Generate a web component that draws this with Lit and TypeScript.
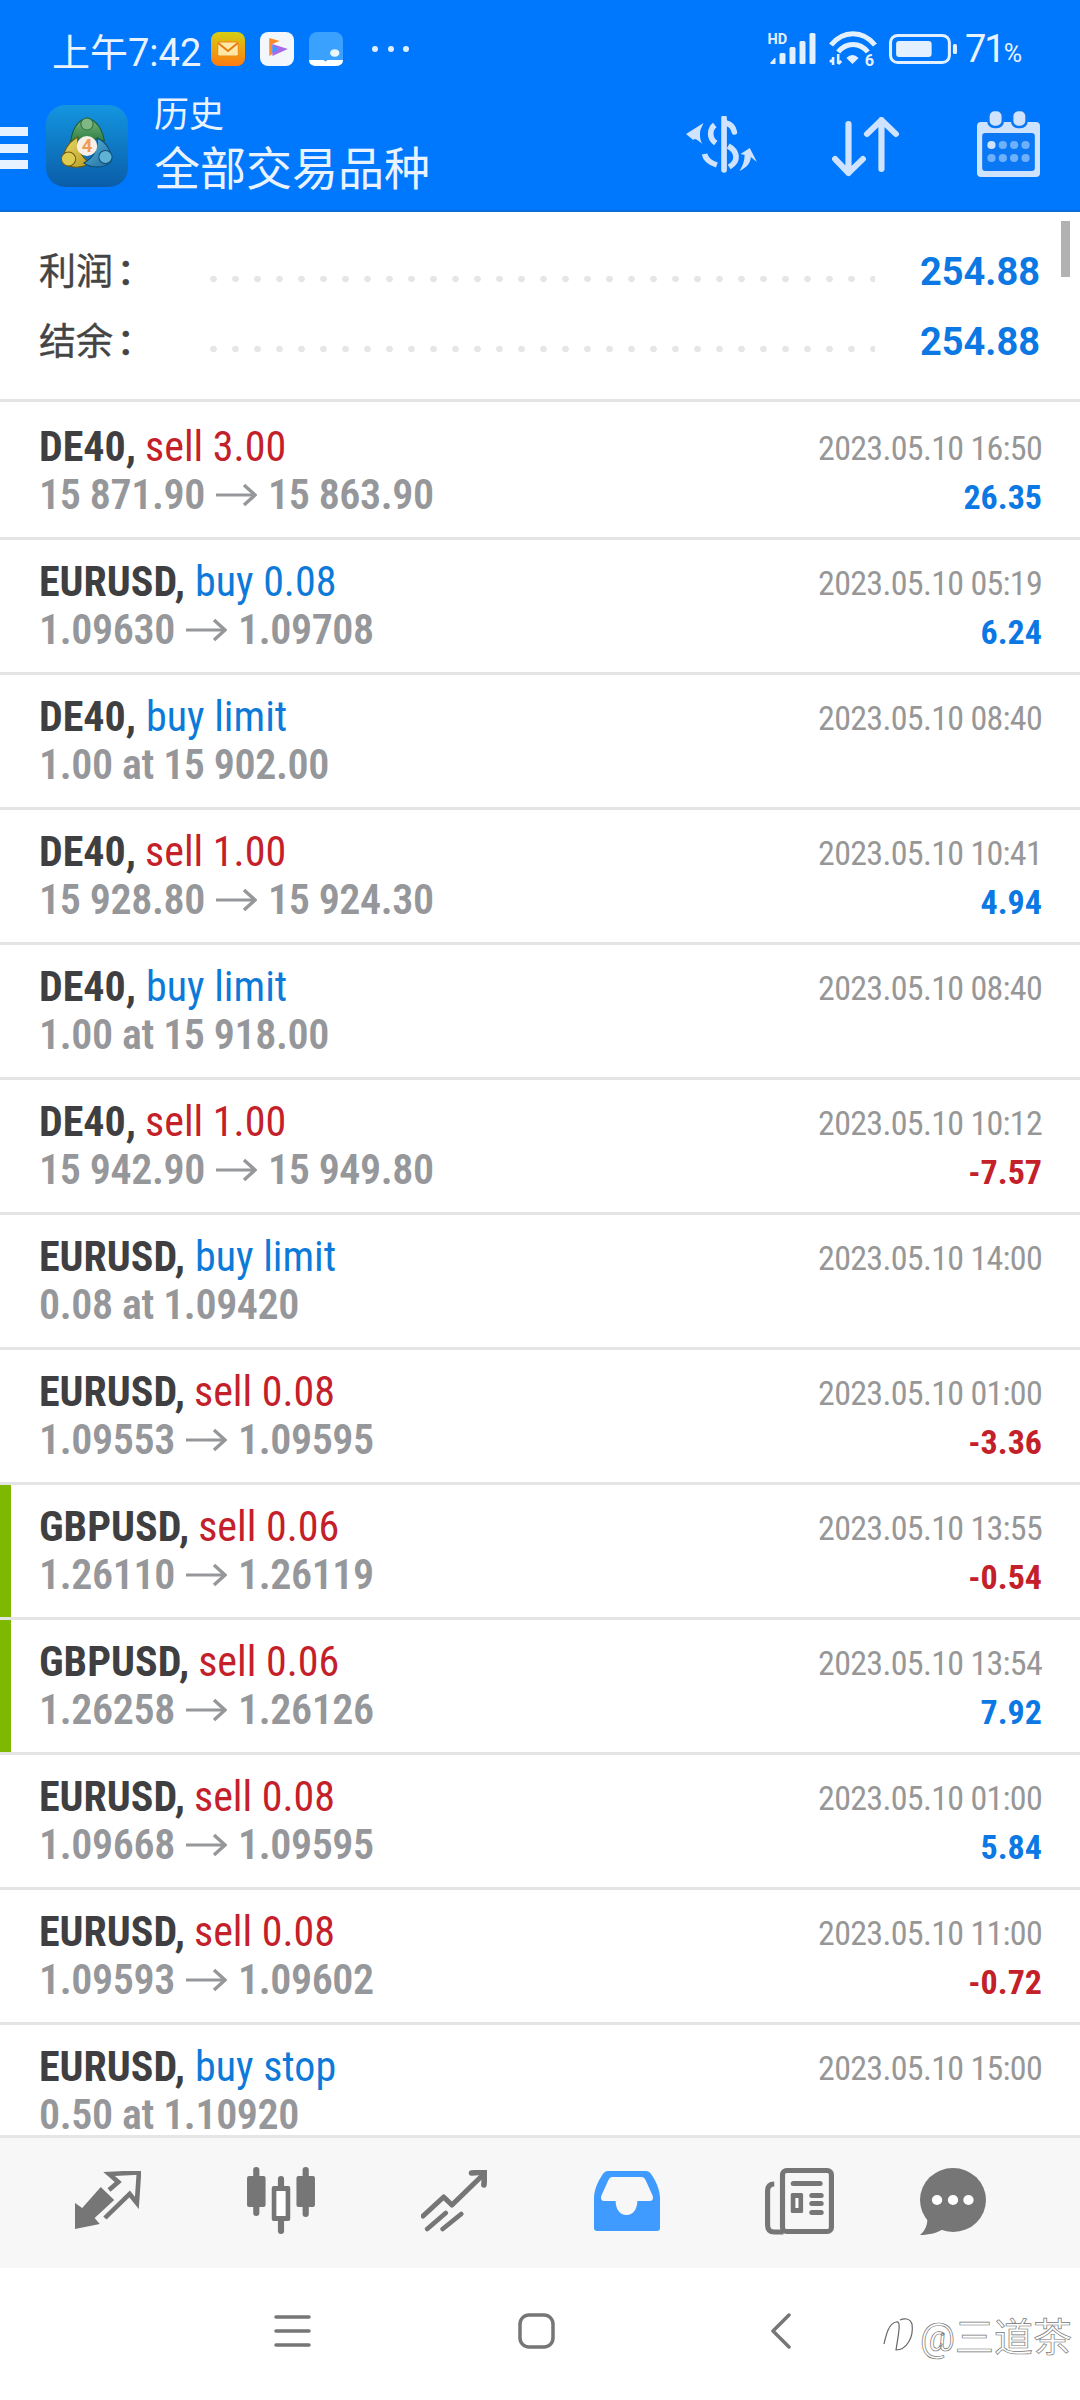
import { LitElement, html, css, svg, nothing } from 'lit';
import { customElement } from 'lit/decorators.js';
import { classMap } from 'lit/directives/class-map.js';

type Side = 'sell' | 'buy';

interface Deal {
  symbol: string;
  side: Side;
  action: string;
  from?: string;
  to?: string;
  order?: string;
  time: string;
  profit?: string;
  marked?: boolean;
}

const DEALS: Deal[] = [
  { symbol: 'DE40', side: 'sell', action: 'sell 3.00', from: '15 871.90', to: '15 863.90', time: '2023.05.10 16:50', profit: '26.35' },
  { symbol: 'EURUSD', side: 'buy', action: 'buy 0.08', from: '1.09630', to: '1.09708', time: '2023.05.10 05:19', profit: '6.24' },
  { symbol: 'DE40', side: 'buy', action: 'buy limit', order: '1.00 at 15 902.00', time: '2023.05.10 08:40' },
  { symbol: 'DE40', side: 'sell', action: 'sell 1.00', from: '15 928.80', to: '15 924.30', time: '2023.05.10 10:41', profit: '4.94' },
  { symbol: 'DE40', side: 'buy', action: 'buy limit', order: '1.00 at 15 918.00', time: '2023.05.10 08:40' },
  { symbol: 'DE40', side: 'sell', action: 'sell 1.00', from: '15 942.90', to: '15 949.80', time: '2023.05.10 10:12', profit: '-7.57' },
  { symbol: 'EURUSD', side: 'buy', action: 'buy limit', order: '0.08 at 1.09420', time: '2023.05.10 14:00' },
  { symbol: 'EURUSD', side: 'sell', action: 'sell 0.08', from: '1.09553', to: '1.09595', time: '2023.05.10 01:00', profit: '-3.36' },
  { symbol: 'GBPUSD', side: 'sell', action: 'sell 0.06', from: '1.26110', to: '1.26119', time: '2023.05.10 13:55', profit: '-0.54', marked: true },
  { symbol: 'GBPUSD', side: 'sell', action: 'sell 0.06', from: '1.26258', to: '1.26126', time: '2023.05.10 13:54', profit: '7.92', marked: true },
  { symbol: 'EURUSD', side: 'sell', action: 'sell 0.08', from: '1.09668', to: '1.09595', time: '2023.05.10 01:00', profit: '5.84' },
  { symbol: 'EURUSD', side: 'sell', action: 'sell 0.08', from: '1.09593', to: '1.09602', time: '2023.05.10 11:00', profit: '-0.72' },
  { symbol: 'EURUSD', side: 'buy', action: 'buy stop', order: '0.50 at 1.10920', time: '2023.05.10 15:00' },
];

const arrow = html`<svg class="arrow" width="41" height="24" viewBox="0 0 41 24" fill="none" stroke="#96979a">
  <path d="M0 12H39" stroke-width="3" />
  <path d="M28 2L39 12L28 22" stroke-width="3.4" />
</svg>`;

const mailIcon = svg`<svg width="34" height="34" viewBox="0 0 33 34" preserveAspectRatio="none">
  <defs><linearGradient id="mail" x1="0" y1="0" x2="0" y2="1"><stop offset="0" stop-color="#d3cf12" /><stop offset="1" stop-color="#ff7a10" /></linearGradient></defs>
  <rect width="33" height="34" rx="8" fill="url(#mail)" />
  <rect x="6.5" y="10" width="20" height="14" rx="1.5" fill="#ffe9a8" stroke="#f08a10" stroke-width="1" />
  <path d="M7 11L16.5 19L26 11" fill="none" stroke="#e57c0c" stroke-width="1.8" />
</svg>`;

const playIcon = svg`<svg width="34" height="34" viewBox="0 0 33 34" preserveAspectRatio="none">
  <rect width="33" height="34" rx="8" fill="#f3f6fb" />
  <path d="M9 6L19 9L12 12V22L9 24Z" fill="#ff8a2a" />
  <path d="M12 12L27 17L12 24Z" fill="#a86be8" />
  <path d="M12 13L18 17L12 21Z" fill="#3f9bff" />
</svg>`;

const noteIcon = svg`<svg width="34" height="34" viewBox="0 0 33 34" preserveAspectRatio="none">
  <path d="M8 0H25A8 8 0 0 1 33 8V27Q33 34 25 34H8Q0 34 0 27V8A8 8 0 0 1 8 0Z" fill="#3ba1ff" />
  <path d="M0 28H14L16 29.5L18 28H33V28Q33 34 25 34H8Q0 34 0 28Z" fill="#fff" />
  <ellipse cx="25" cy="21" rx="4.5" ry="3.8" fill="#eaf6ff" />
</svg>`;

const signalIcon = svg`<svg width="50" height="34" viewBox="0 0 49 34" fill="#e3f0ff">
  <text x="0" y="12" font-family="Roboto" font-weight="700" font-size="14.5">HD</text>
  <path d="M3 30.5L7 26H8V32H3Z" />
  <rect x="12" y="21" width="6" height="11" rx="1.5" />
  <rect x="22" y="15" width="6" height="17" rx="1.5" />
  <rect x="32" y="9" width="6" height="23" rx="1.5" />
  <rect x="42" y="1" width="6" height="31" rx="1.5" />
</svg>`;

const wifiIcon = svg`<svg width="48" height="36" viewBox="0 0 47 36" preserveAspectRatio="none" fill="none" stroke="#e3f0ff" stroke-width="5">
  <path d="M2 14C14 -1 33 -1 45 14" />
  <path d="M9 21C17 11 30 11 38 21" />
  <path d="M17 27Q23 21 29 27L23 33Z" fill="#e3f0ff" stroke="none" />
  <path d="M4 26V34M3 29L1 31M9 23V33M9 33L12 30" stroke-width="2.5" />
  <text x="35" y="35" font-family="Roboto" font-weight="700" font-size="16" fill="#e3f0ff" stroke="none">6</text>
</svg>`;

const batteryIcon = svg`<svg width="68" height="30" viewBox="0 0 67 30" preserveAspectRatio="none">
  <rect x="1.5" y="1.5" width="58" height="27" rx="7" fill="none" stroke="#e3f0ff" stroke-width="3" />
  <rect x="7" y="7" width="35" height="16" rx="3" fill="#e3f0ff" />
  <rect x="63" y="10" width="4" height="10" rx="1.5" fill="#e3f0ff" />
</svg>`;

const appIcon = svg`<svg width="82" height="82" viewBox="0 0 80 82" preserveAspectRatio="none">
  <defs>
    <linearGradient id="app" x1="0" y1="0" x2="0" y2="1"><stop offset="0" stop-color="#1495e0" /><stop offset="1" stop-color="#0a5da8" /></linearGradient>
    <linearGradient id="fig-g" x1="0" y1="0" x2="0" y2="1"><stop offset="0" stop-color="#79b57a" /><stop offset="1" stop-color="#2e7f45" /></linearGradient>
    <linearGradient id="fig-y" x1="0" y1="0" x2="1" y2="1"><stop offset="0" stop-color="#eadb6a" /><stop offset="1" stop-color="#b89a20" /></linearGradient>
    <linearGradient id="fig-b" x1="0" y1="0" x2="1" y2="1"><stop offset="0" stop-color="#5cb8dc" /><stop offset="1" stop-color="#1c6c9f" /></linearGradient>
  </defs>
  <rect width="80" height="82" rx="19" fill="url(#app)" />
  <path d="M40 13C49 15 55 24 57 36L48 34L32 34L24 36C26 24 31 15 40 13Z" fill="url(#fig-g)" stroke="#1c5a33" stroke-width="1" />
  <circle cx="40" cy="19" r="6" fill="#7fb884" stroke="#2c6d40" stroke-width="1" />
  <path d="M31 32C21 38 16 47 17 58C24 64 36 63 43 58C34 52 30 44 31 32Z" fill="url(#fig-y)" stroke="#6d5a10" stroke-width="1" />
  <circle cx="22" cy="54" r="7" fill="#dccb4f" stroke="#6d5a10" stroke-width="1" />
  <path d="M50 33C60 38 65 47 63 57C56 64 44 63 37 58C47 52 51 44 50 33Z" fill="url(#fig-b)" stroke="#104c72" stroke-width="1" />
  <circle cx="58" cy="52" r="6.5" fill="#5fb2d4" stroke="#104c72" stroke-width="1" />
  <circle cx="40" cy="41" r="10" fill="#f8efe6" />
  <text x="40" y="47.5" text-anchor="middle" font-family="Roboto" font-weight="700" font-size="18" fill="#ee9d55">4</text>
</svg>`;

const ICON_TINT = '#cfe3ff';

const dollarIcon = svg`<svg width="72" height="57" viewBox="0 0 70 57" preserveAspectRatio="none" fill="none" stroke=${ICON_TINT} stroke-width="5.5" stroke-linecap="round">
  <path d="M37 2V54" />
  <path d="M47 16C46 11 43 8 39 7" />
  <path d="M28 9C23 13 22 22 29 27" stroke-linecap="butt" />
  <path d="M41 30C50 35 52 45 42 51" stroke-linecap="butt" />
  <path d="M18 38C19 43 24 47 30 49" stroke-linecap="butt" />
  <path d="M0 18L17 7L14 14C13 20 14 25 16 28C12 25 9 21 7 24Z" fill=${ICON_TINT} stroke="none" />
  <path d="M69 46L62 32L53 38L57 39C57 45 55 50 52 55C60 51 63 46 63 41Z" fill=${ICON_TINT} stroke="none" />
</svg>`;

const sortIcon = svg`<svg class="sort" width="68" height="60" viewBox="0 0 66 60" preserveAspectRatio="none" fill="none" stroke=${ICON_TINT} stroke-width="6" stroke-linecap="round" stroke-linejoin="round">
  <path d="M16 7V56M3 42L16 56L30 42" />
  <path d="M48 52V3M34 17L48 3L62 17" />
</svg>`;

const calendarIcon = svg`<svg class="calendar" width="63" height="66" viewBox="0 0 61 66" preserveAspectRatio="none">
  <rect y="11" width="61" height="55" rx="4" fill=${ICON_TINT} />
  <rect x="5" y="22" width="51" height="38" rx="3" fill="#0a78f5" />
  <rect x="11" y="-1" width="14" height="17" rx="6" fill=${ICON_TINT} stroke="#0a78f5" stroke-width="2.5" />
  <rect x="34" y="-1" width="14" height="17" rx="6" fill=${ICON_TINT} stroke="#0a78f5" stroke-width="2.5" />
  <circle cx="14" cy="34" r="4" fill=${ICON_TINT} />
  ${[25, 36, 47].map((x) => svg`<circle cx=${x} cy="34" r="4" fill="#6fb0fb" />`)}
  ${[14, 25, 36, 47].map((x) => svg`<circle cx=${x} cy="47" r="4" fill="#6fb0fb" />`)}
</svg>`;

const tradeTab = svg`<svg width="66" height="60" viewBox="0 0 64 60" preserveAspectRatio="none">
  <path d="M0 58V32L7 37L25 16L38 29L19 47L24 53Z" fill="#767676" />
  <path d="M33 19L42 11L33 3L62 1.5L60 32L53 23L29 47" fill="none" stroke="#767676" stroke-width="4.5" />
</svg>`;

const chartTab = svg`<svg width="70" height="68" viewBox="0 0 68 68" preserveAspectRatio="none" fill="#767676">
  <rect x="7" y="0" width="6" height="49" rx="3" />
  <rect x="1" y="9" width="18" height="31" rx="2" />
  <rect x="31" y="9" width="6" height="58" rx="3" />
  <rect x="25" y="19" width="18" height="35" rx="2" />
  <rect x="29.5" y="24" width="9" height="25" fill="#fff" />
  <rect x="55" y="0" width="6" height="50" rx="3" />
  <rect x="49" y="9" width="18" height="31" rx="2" />
</svg>`;

const trendTab = svg`<svg width="66" height="62" viewBox="0 0 64 62" preserveAspectRatio="none" fill="none" stroke="#767676" stroke-width="5" stroke-linecap="round" stroke-linejoin="round">
  <path d="M2 46L22 27L30 35L60 5" />
  <path d="M49 3L62 2L61 15" stroke-width="5.5" />
  <path d="M6 59L24 43M21 59L39 44" stroke-width="4.5" />
</svg>`;

const inboxTab = svg`<svg width="66" height="60" viewBox="0 0 64 60" preserveAspectRatio="none">
  <path fill-rule="evenodd" d="M14 0H50C53 0 55 2 56 4C60 10 64 19 64 27V57Q64 60 61 60H3Q0 60 0 57V27C0 19 4 10 8 4C9 2 11 0 14 0ZM18 6C16 6 15 7 14 9L7 25Q6 30 10 30H21C21 38 25 44 31.5 44C38 44 42 38 42 30H54Q58 30 57 25L50 9C49 7 48 6 46 6Z" fill="#3f9bff" />
</svg>`;

const newsTab = svg`<svg width="69" height="67" viewBox="0 0 67 67" preserveAspectRatio="none">
  <rect x="17" y="2.5" width="47.5" height="61" rx="4" fill="none" stroke="#767676" stroke-width="5" />
  <path d="M9 16Q2.5 16 2.5 23V57Q2.5 64 9 64H18" fill="none" stroke="#767676" stroke-width="5" />
  <rect x="25" y="13" width="31" height="5" rx="2.5" fill="#767676" />
  <rect x="25" y="25" width="12" height="20" rx="1.5" fill="#767676" />
  <rect x="29.5" y="30" width="3" height="10" fill="#fff" />
  <rect x="43" y="25" width="14" height="5" rx="2.5" fill="#767676" />
  <rect x="43" y="33" width="14" height="5" rx="2.5" fill="#767676" />
  <rect x="43" y="42" width="14" height="5" rx="2.5" fill="#767676" />
</svg>`;

const chatTab = svg`<svg width="66" height="67" viewBox="0 0 64 67" preserveAspectRatio="none">
  <circle cx="32" cy="32" r="32" fill="#767676" />
  <path d="M7 48C8 56 5 63 0 67C9 67 17 65 24 60Z" fill="#767676" />
  <circle cx="16.5" cy="32" r="5" fill="#fff" />
  <circle cx="32" cy="32" r="5" fill="#fff" />
  <circle cx="47" cy="32" r="5" fill="#fff" />
</svg>`;

@customElement('app-root')
export class AppRoot extends LitElement {
  static styles = css`
    :host {
      display: block;
      width: 1080px;
      height: 2400px;
      overflow: hidden;
      background: #fff;
      font-family: Roboto, 'Noto Sans CJK SC', sans-serif;
    }

    .page {
      display: flex;
      flex-direction: column;
      height: 2400px;
      position: relative;
    }

    .top {
      background: #0078fe;
      border-bottom: 2px solid #0b6ed8;
      color: #e8f3ff;
      height: 210px;
      flex: none;
    }

    .status {
      display: flex;
      align-items: center;
      height: 98px;
      padding: 0 58px 0 52px;
      box-sizing: border-box;
    }

    .clock {
      font-size: 38px;
      width: 159px;
      white-space: nowrap;
    }

    .notes {
      display: flex;
      gap: 15px;
      align-items: center;
    }

    .more {
      display: flex;
      gap: 9.5px;
      margin-left: 29px;
    }

    .more i {
      width: 6px;
      height: 6px;
      border-radius: 50%;
      background: #dfeeff;
    }

    .sys {
      margin-left: auto;
      display: flex;
      align-items: center;
      gap: 12px;
    }

    .pct {
      font-size: 38px;
      letter-spacing: -2px;
      margin-left: -4px;
      white-space: nowrap;
    }

    .pct small {
      font-size: 25px;
      letter-spacing: 0;
    }

    .bar {
      display: flex;
      align-items: flex-start;
      height: 112px;
    }

    .burger {
      width: 28px;
      display: flex;
      flex-direction: column;
      gap: 7.5px;
      margin-top: 29px;
    }

    .burger i {
      height: 9px;
      background: #e6f2ff;
    }

    .logo {
      margin-left: 18px;
      margin-top: 7px;
      display: flex;
    }

    .titles {
      margin-left: 26px;
      margin-top: -7px;
    }

    .sub {
      font-size: 35px;
      line-height: 50px;
    }

    .name {
      font-size: 46px;
      line-height: 56px;
    }

    .actions {
      margin-left: auto;
      margin-top: 13px;
      padding-right: 40px;
      display: flex;
      align-items: center;
      gap: 74px;
    }

    .actions svg {
      display: block;
    }

    .actions .sort {
      margin-top: 6px;
    }

    .actions .calendar {
      margin-left: 3px;
    }

    .summary {
      flex: none;
      height: 190px;
      margin-bottom: 3px;
      padding: 25px 40px 0 39px;
      box-sizing: border-box;
      border-bottom: 3px solid #e4e4e4;
      position: relative;
    }

    .sum-row {
      display: flex;
      align-items: center;
      height: 70px;
    }

    .sum-label {
      width: 171px;
      flex: none;
      margin-top: -6px;
      font-size: 37px;
      color: #444;
      -webkit-text-stroke: 0.4px #444;
    }

    .sum-label b {
      font-size: 44px;
      font-weight: 500;
      line-height: 37px;
      margin-left: 7px;
    }

    .dots {
      flex: 1;
      height: 8px;
      margin: 13px 45px 0 0;
      background-image: radial-gradient(circle at 3.5px 4px, #e6e6e6 3px, transparent 3.6px);
      background-size: 22px 8px;
      background-repeat: repeat-x;
    }

    .sum-value {
      font-size: 38px;
      font-weight: 700;
      color: #0b78e3;
    }

    .scroll {
      position: absolute;
      top: 9px;
      right: 10px;
      width: 9px;
      height: 56px;
      background: #b2b2b2;
    }

    .list {
      flex: none;
      height: 1730px;
      overflow: hidden;
    }

    .row {
      display: flex;
      justify-content: space-between;
      height: 135px;
      padding: 18px 38px 0 39px;
      box-sizing: border-box;
      border-bottom: 3px solid #e4e4e4;
      line-height: 48px;
      white-space: nowrap;
      font-stretch: 75%;
    }

    .row.marked {
      background: linear-gradient(#7fb800, #7fb800) left / 11px 100% no-repeat;
    }

    .line {
      height: 48px;
      display: flex;
      align-items: baseline;
      font-size: 42px;
    }

    .symbol {
      font-weight: 700;
      color: #3f3f41;
    }

    .sell {
      color: #c4202a;
      margin-left: 9px;
    }

    .buy {
      color: #0d7ad9;
      margin-left: 10px;
    }

    .price {
      font-weight: 600;
      letter-spacing: -0.4px;
      color: #96979a;
    }

    .arrow {
      margin: 0 11px;
      align-self: center;
    }

    .right {
      text-align: right;
      padding-top: 1px;
    }

    .time {
      font-size: 34px;
      letter-spacing: -0.7px;
      color: #979797;
    }

    .profit {
      margin-top: 1px;
      font-size: 34px;
      font-weight: 700;
    }

    .profit.up {
      color: #0b78e3;
    }

    .profit.down {
      color: #c4202a;
    }

    .tabs {
      flex: none;
      height: 133px;
      box-sizing: border-box;
      background: #f7f7f7;
      border-top: 3px solid #e6e6e6;
      display: grid;
      grid-template-columns: repeat(5, 172.8px) 1fr;
      align-items: center;
      justify-items: center;
      padding: 0 60px 0 22px;
    }

    .tabs svg {
      display: block;
      margin-top: -4px;
    }

    .nav {
      flex: none;
      height: 132px;
      box-sizing: border-box;
      display: flex;
      align-items: center;
      padding: 0 0 6px 274px;
    }

    .nav-square {
      margin-left: 207px;
    }

    .nav-back {
      margin-left: 216px;
    }

    .mark {
      position: absolute;
      left: 882px;
      bottom: 38px;
      display: flex;
      align-items: center;
      gap: 4px;
      font-size: 39px;
      color: #fff;
      -webkit-text-stroke: 0.7px #777;
      white-space: nowrap;
    }
  `;

  private renderDeal(deal: Deal) {
    return html`
      <div class=${classMap({ row: true, marked: !!deal.marked })}>
        <div>
          <div class="line">
            <span class="symbol">${deal.symbol},</span>
            <span class=${deal.side}>${deal.action}</span>
          </div>
          <div class="line price">
            ${deal.order
              ? deal.order
              : html`<span>${deal.from}</span>${arrow}<span>${deal.to}</span>`}
          </div>
        </div>
        <div class="right">
          <div class="time">${deal.time}</div>
          ${deal.profit
            ? html`<div class="profit ${deal.profit.startsWith('-') ? 'down' : 'up'}">${deal.profit}</div>`
            : nothing}
        </div>
      </div>
    `;
  }

  render() {
    return html`
      <div class="page">
        <div class="top">
          <div class="status">
            <div class="clock">上午7:42</div>
            <div class="notes">${mailIcon}${playIcon}${noteIcon}</div>
            <div class="more"><i></i><i></i><i></i></div>
            <div class="sys">
              ${signalIcon}${wifiIcon}${batteryIcon}
              <div class="pct">71<small>%</small></div>
            </div>
          </div>
          <div class="bar">
            <div class="burger"><i></i><i></i><i></i></div>
            <div class="logo">${appIcon}</div>
            <div class="titles">
              <div class="sub">历史</div>
              <div class="name">全部交易品种</div>
            </div>
            <div class="actions">${dollarIcon}${sortIcon}${calendarIcon}</div>
          </div>
        </div>

        <div class="summary">
          <div class="sum-row">
            <span class="sum-label">利润<b>:</b></span><span class="dots"></span><span class="sum-value">254.88</span>
          </div>
          <div class="sum-row">
            <span class="sum-label">结余<b>:</b></span><span class="dots"></span><span class="sum-value">254.88</span>
          </div>
          <div class="scroll"></div>
        </div>

        <div class="list">${DEALS.map((deal) => this.renderDeal(deal))}</div>

        <div class="tabs">
          ${tradeTab}${chartTab}${trendTab}${inboxTab}${newsTab}${chatTab}
        </div>

        <div class="nav">
          <svg width="37" height="32" viewBox="0 0 37 32" fill="none" stroke="#767676" stroke-width="3.5" stroke-linecap="round">
            <path d="M2 2H35M2 16H35M2 30H35" />
          </svg>
          <svg class="nav-square" width="37" height="36" viewBox="0 0 37 36" fill="none" stroke="#767676" stroke-width="3.5">
            <rect x="2" y="2" width="33" height="32" rx="9" />
          </svg>
          <svg class="nav-back" width="20" height="36" viewBox="0 0 20 36" fill="none" stroke="#767676" stroke-width="3.5" stroke-linecap="round" stroke-linejoin="round">
            <path d="M18 2L2 18L18 34" />
          </svg>
        </div>

        <div class="mark">
          <svg width="34" height="42" viewBox="0 0 34 40" fill="none" stroke="#666" stroke-width="1.2">
            <path d="M2 30C4 22 6 10 14 8C20 6 16 22 14 36C24 36 32 24 30 10C28 4 22 4 18 6" />
          </svg>
          <span>@三道茶</span>
        </div>
      </div>
    `;
  }
}
